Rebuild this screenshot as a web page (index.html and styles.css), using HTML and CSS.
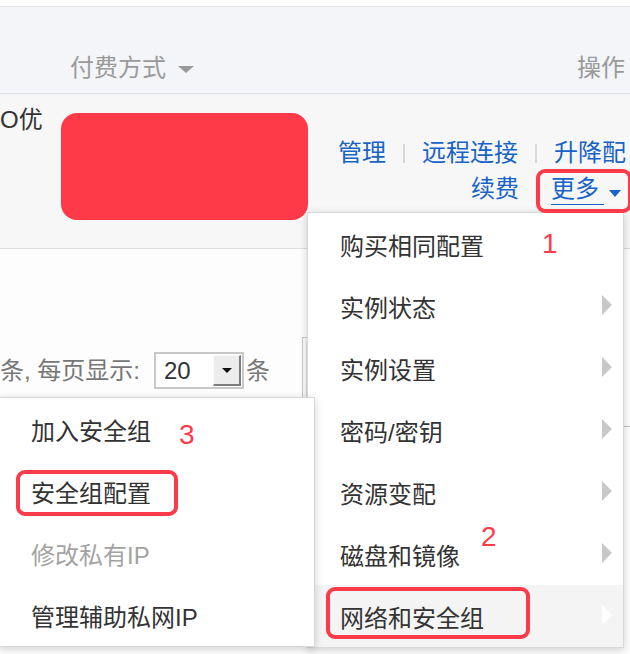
FILE: index.html
```html
<!DOCTYPE html>
<html lang="zh-CN">
<head>
<meta charset="utf-8">
<title>实例列表</title>
<link rel="stylesheet" href="styles.css">
</head>
<body>
<div class="page">
  <div class="topbar"></div>
  <div class="thead">
    <div class="th th-pay">付费方式<span class="caret-gray"></span></div>
    <div class="th">操作</div>
  </div>
  <div class="trow">
    <div class="cell-name">O优</div>
    <div class="redact"></div>
    <div class="ops">
      <div class="ops-line"><a class="link">管理</a><span class="sep"></span><a class="link">远程连接</a><span class="sep"></span><a class="link">升降配</a></div>
      <div class="ops-line"><a class="link renew">续费</a><a class="link more">更多</a><span class="caret-blue"></span></div>
    </div>
  </div>
  <div class="pager">
    <span class="pager-text">条, 每页显示:</span>
    <div class="select"><span class="select-value">20</span><span class="select-btn"><span class="select-arrow"></span></span></div>
    <span class="pager-text unit">条</span>
    <div class="pager-box"></div>
  </div>
  <div class="divider"></div>

  <ul class="menu menu-main">
    <li class="menu-item">购买相同配置</li>
    <li class="menu-item">实例状态<span class="arrow"></span></li>
    <li class="menu-item">实例设置<span class="arrow"></span></li>
    <li class="menu-item">密码/密钥<span class="arrow"></span></li>
    <li class="menu-item">资源变配<span class="arrow"></span></li>
    <li class="menu-item">磁盘和镜像<span class="arrow"></span></li>
    <li class="menu-item active">网络和安全组<span class="arrow"></span></li>
  </ul>

  <ul class="menu menu-sub">
    <li class="menu-item">加入安全组</li>
    <li class="menu-item">安全组配置</li>
    <li class="menu-item disabled">修改私有IP</li>
    <li class="menu-item">管理辅助私网IP</li>
  </ul>

  <div class="redbox box-more"></div>
  <div class="redbox box-net"></div>
  <div class="redbox box-sg"></div>
  <span class="note note-1">1</span>
  <span class="note note-2">2</span>
  <span class="note note-3">3</span>
</div>
</body>
</html>
```

FILE: styles.css
```css
html, body {
  margin: 0;
  padding: 0;
}
body {
  background: #fdfdfd;
  font-family: "Liberation Sans", "Noto Sans CJK SC", sans-serif;
  font-size: 24px;
  color: #333;
}
.page {
  position: relative;
  width: 630px;
  height: 654px;
  overflow: hidden;
  background: #fdfdfd;
}
.topbar {
  height: 6px;
  background: #fff;
  border-bottom: 1px solid #e3e5e9;
}
.thead {
  height: 87px;
  box-sizing: border-box;
  background: #f4f5f8;
  border-bottom: 1px solid #dfe1e4;
  display: flex;
  justify-content: space-between;
  align-items: flex-start;
  padding: 45px 5px 0 70px;
  line-height: 32px;
  color: #9a9a9a;
}
.th-pay {
  display: flex;
  align-items: center;
}
.caret-gray {
  width: 0;
  height: 0;
  border-top: 7px solid #9a9a9a;
  border-left: 8px solid transparent;
  border-right: 8px solid transparent;
  margin-left: 12px;
  margin-top: 3px;
}
.trow {
  height: 155px;
  box-sizing: border-box;
  background: #f7f7f7;
  border-bottom: 1px solid #dcdcdc;
  display: flex;
  align-items: flex-start;
}
.cell-name {
  width: 61px;
  flex-shrink: 0;
  padding-top: 10px;
  line-height: 32px;
  color: #333;
  white-space: nowrap;
}
.redact {
  width: 247px;
  height: 107px;
  flex-shrink: 0;
  margin-top: 19px;
  background: #fe3a48;
  border-radius: 16px;
}
.ops {
  flex: 1;
  padding: 41px 4px 0 0;
  display: flex;
  flex-direction: column;
  align-items: flex-end;
  line-height: 36px;
}
.ops-line {
  display: flex;
  align-items: center;
  height: 36px;
}
.link {
  color: #1763c6;
  text-decoration: none;
}
.sep {
  width: 2px;
  height: 19px;
  background: #d8d8d8;
  margin: 0 17px;
}
.renew {
  margin-right: 32px;
}
.more {
  line-height: 30px;
  padding-right: 5px;
  border-bottom: 1px solid #1763c6;
}
.caret-blue {
  width: 0;
  height: 0;
  border-top: 7px solid #1763c6;
  border-left: 6px solid transparent;
  border-right: 6px solid transparent;
  margin-left: 5px;
  margin-right: 5px;
  margin-top: 8px;
}
.pager {
  margin-top: 103px;
  height: 37px;
  display: flex;
  align-items: flex-start;
}
.pager-text {
  line-height: 37px;
  color: #777;
  white-space: pre;
  flex-shrink: 0;
}
.select {
  margin-left: 14px;
  width: 90px;
  height: 37px;
  box-sizing: border-box;
  border: 2px solid #c8c8c8;
  background: #fff;
  display: flex;
  flex-shrink: 0;
}
.select-value {
  flex: 1;
  padding-left: 8px;
  line-height: 33px;
  color: #333;
}
.select-btn {
  width: 28px;
  height: 31px;
  margin: 1px 1px 1px 0;
  box-sizing: border-box;
  background: #ececec;
  border-top: 1px solid #fafafa;
  border-left: 1px solid #fafafa;
  border-right: 2px solid #7d7d7d;
  border-bottom: 2px solid #7d7d7d;
  display: flex;
  align-items: center;
  justify-content: center;
}
.select-arrow {
  width: 0;
  height: 0;
  border-top: 5px solid #111;
  border-left: 5px solid transparent;
  border-right: 5px solid transparent;
}
.unit {
  margin-left: 2px;
}
.pager-box {
  margin-left: 32px;
  margin-top: -15px;
  width: 300px;
  height: 90px;
  flex-shrink: 0;
  box-sizing: border-box;
  border: 1px solid #c8c8c8;
  box-shadow: inset 3px 3px 0 #fafafa, inset 4px 4px 0 #dddddd;
}
.divider {
  margin-top: 37px;
  border-top: 1px solid #c4c4c4;
}

/* dropdown menus */
.menu {
  position: absolute;
  margin: 0;
  padding: 0;
  list-style: none;
  background: #fff;
  border: 1px solid #d8d8d8;
  box-shadow: 0 2px 8px rgba(0, 0, 0, 0.18);
  box-sizing: border-box;
}
.menu-main {
  left: 307px;
  top: 212px;
  width: 317px;
  z-index: 2;
}
.menu-sub {
  left: -2px;
  top: 397px;
  width: 317px;
  z-index: 3;
}
.menu-item {
  height: 62px;
  display: flex;
  align-items: center;
  justify-content: space-between;
  padding: 0 11px 0 32px;
  color: #333;
  white-space: nowrap;
}
.menu-item.active {
  background: #f4f4f4;
}
.menu-item.disabled {
  color: #a3a3a3;
}
.arrow {
  width: 0;
  height: 0;
  border-left: 10px solid #c8c8c8;
  border-top: 10px solid transparent;
  border-bottom: 10px solid transparent;
  margin-top: -3px;
}
.menu-item.active .arrow {
  border-left-color: #ffffff;
}

/* annotations */
.redbox {
  position: absolute;
  z-index: 5;
  box-sizing: border-box;
  border: 4px solid #fb3a4a;
  border-radius: 9px;
}
.box-more {
  left: 536px;
  top: 169px;
  width: 96px;
  height: 44px;
}
.box-net {
  left: 326px;
  top: 587px;
  width: 204px;
  height: 52px;
}
.box-sg {
  left: 16px;
  top: 470px;
  width: 162px;
  height: 46px;
}
.note {
  position: absolute;
  z-index: 5;
  font-family: "Liberation Sans", sans-serif;
  font-size: 28px;
  line-height: 28px;
  color: #fd3b4b;
}
.note-1 {
  left: 542px;
  top: 230px;
}
.note-2 {
  left: 481px;
  top: 523px;
}
.note-3 {
  left: 179px;
  top: 421px;
}
```
